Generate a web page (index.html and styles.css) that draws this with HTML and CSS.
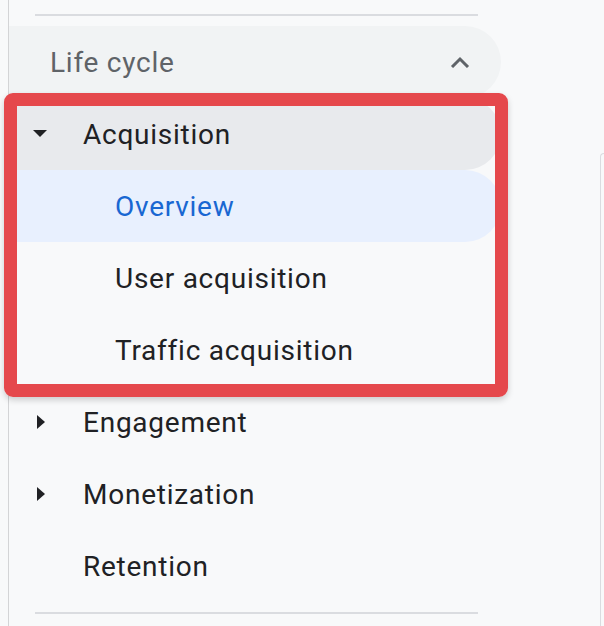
FILE: index.html
```html
<!DOCTYPE html>
<html>
<head>
<meta charset="utf-8">
<link rel="stylesheet" href="styles.css">
</head>
<body>
<div class="page">
  <nav class="sidebar">
    <div class="divider"></div>
    <div class="group">
      <div class="row section">
        <span class="label">Life cycle</span>
        <svg class="chev" width="20" height="12" viewBox="0 0 20 12"><path d="M2 11 L10 3 L18 11" fill="none" stroke="#5f6368" stroke-width="3"/></svg>
      </div>
      <div class="highlight-wrap">
        <div class="row item open">
          <span class="caret"><svg width="14" height="8" viewBox="0 0 14 8"><path d="M0 0 H14 L7 7 Z" fill="#202124"/></svg></span>
          <span class="label">Acquisition</span>
        </div>
        <div class="row sub active"><span class="label">Overview</span></div>
        <div class="row sub"><span class="label">User acquisition</span></div>
        <div class="row sub"><span class="label">Traffic acquisition</span></div>
        <div class="annot"></div>
      </div>
      <div class="row item">
        <span class="caret"><svg width="8" height="14" viewBox="0 0 8 14"><path d="M0 0 L8 7 L0 14 Z" fill="#202124"/></svg></span>
        <span class="label">Engagement</span>
      </div>
      <div class="row item">
        <span class="caret"><svg width="8" height="14" viewBox="0 0 8 14"><path d="M0 0 L8 7 L0 14 Z" fill="#202124"/></svg></span>
        <span class="label">Monetization</span>
      </div>
      <div class="row item">
        <span class="caret"></span>
        <span class="label">Retention</span>
      </div>
    </div>
    <div class="divider bottom"></div>
  </nav>
  <main class="main">
    <div class="card"></div>
  </main>
</div>
</body>
</html>
```
FILE: styles.css
```css
* { box-sizing: border-box; }
html, body { margin: 0; padding: 0; }
body {
  background: #f8f9fa;
  font-family: Roboto, "Liberation Sans", sans-serif;
  overflow: hidden;
  width: 604px;
  height: 626px;
}
.page {
  display: flex;
  height: 626px;
  padding-left: 8px;
}
.sidebar {
  width: 592px;
  flex: none;
  border-left: 1px solid #d3d4d6;
  padding-top: 14px;
}
.divider {
  margin-left: 26px;
  width: 443px;
  height: 2px;
  background: #dadce0;
}
.divider.bottom { margin-top: 10px; }
.group { margin-top: 10px; }
.row {
  display: flex;
  align-items: center;
  height: 72px;
  width: 492px;
  border-radius: 0 36px 36px 0;
  font-size: 28px;
  color: #202124;
  letter-spacing: 0.75px;
}
.section {
  background: #f1f3f4;
  color: #5f6368;
  padding-left: 41px;
  padding-right: 31px;
  justify-content: space-between;
}
.chev { display: block; }
.item { padding-left: 24px; }
.caret {
  width: 50px;
  height: 14px;
  display: flex;
  align-items: center;
}
.caret svg { display: block; }
.item .caret svg[width="8"] { margin-left: 4px; }
.item.open { background: #e8eaed; }
.sub { padding-left: 106px; }
.sub.active { background: #e8f0fe; color: #1967d2; }
.highlight-wrap { position: relative; }
.annot {
  position: absolute;
  left: -5px;
  top: -5px;
  width: 504px;
  height: 304px;
  border: 13px solid #e5484c;
  border-radius: 9px;
  box-shadow: 0 3px 6px rgba(0,0,0,0.18);
}
.main {
  flex: 1;
  padding-top: 153px;
}
.card {
  height: 100%;
  border-left: 1px solid #dadce0;
  border-top: 1px solid #dadce0;
  border-top-left-radius: 10px;
  background: #f8f9fa;
}
```
